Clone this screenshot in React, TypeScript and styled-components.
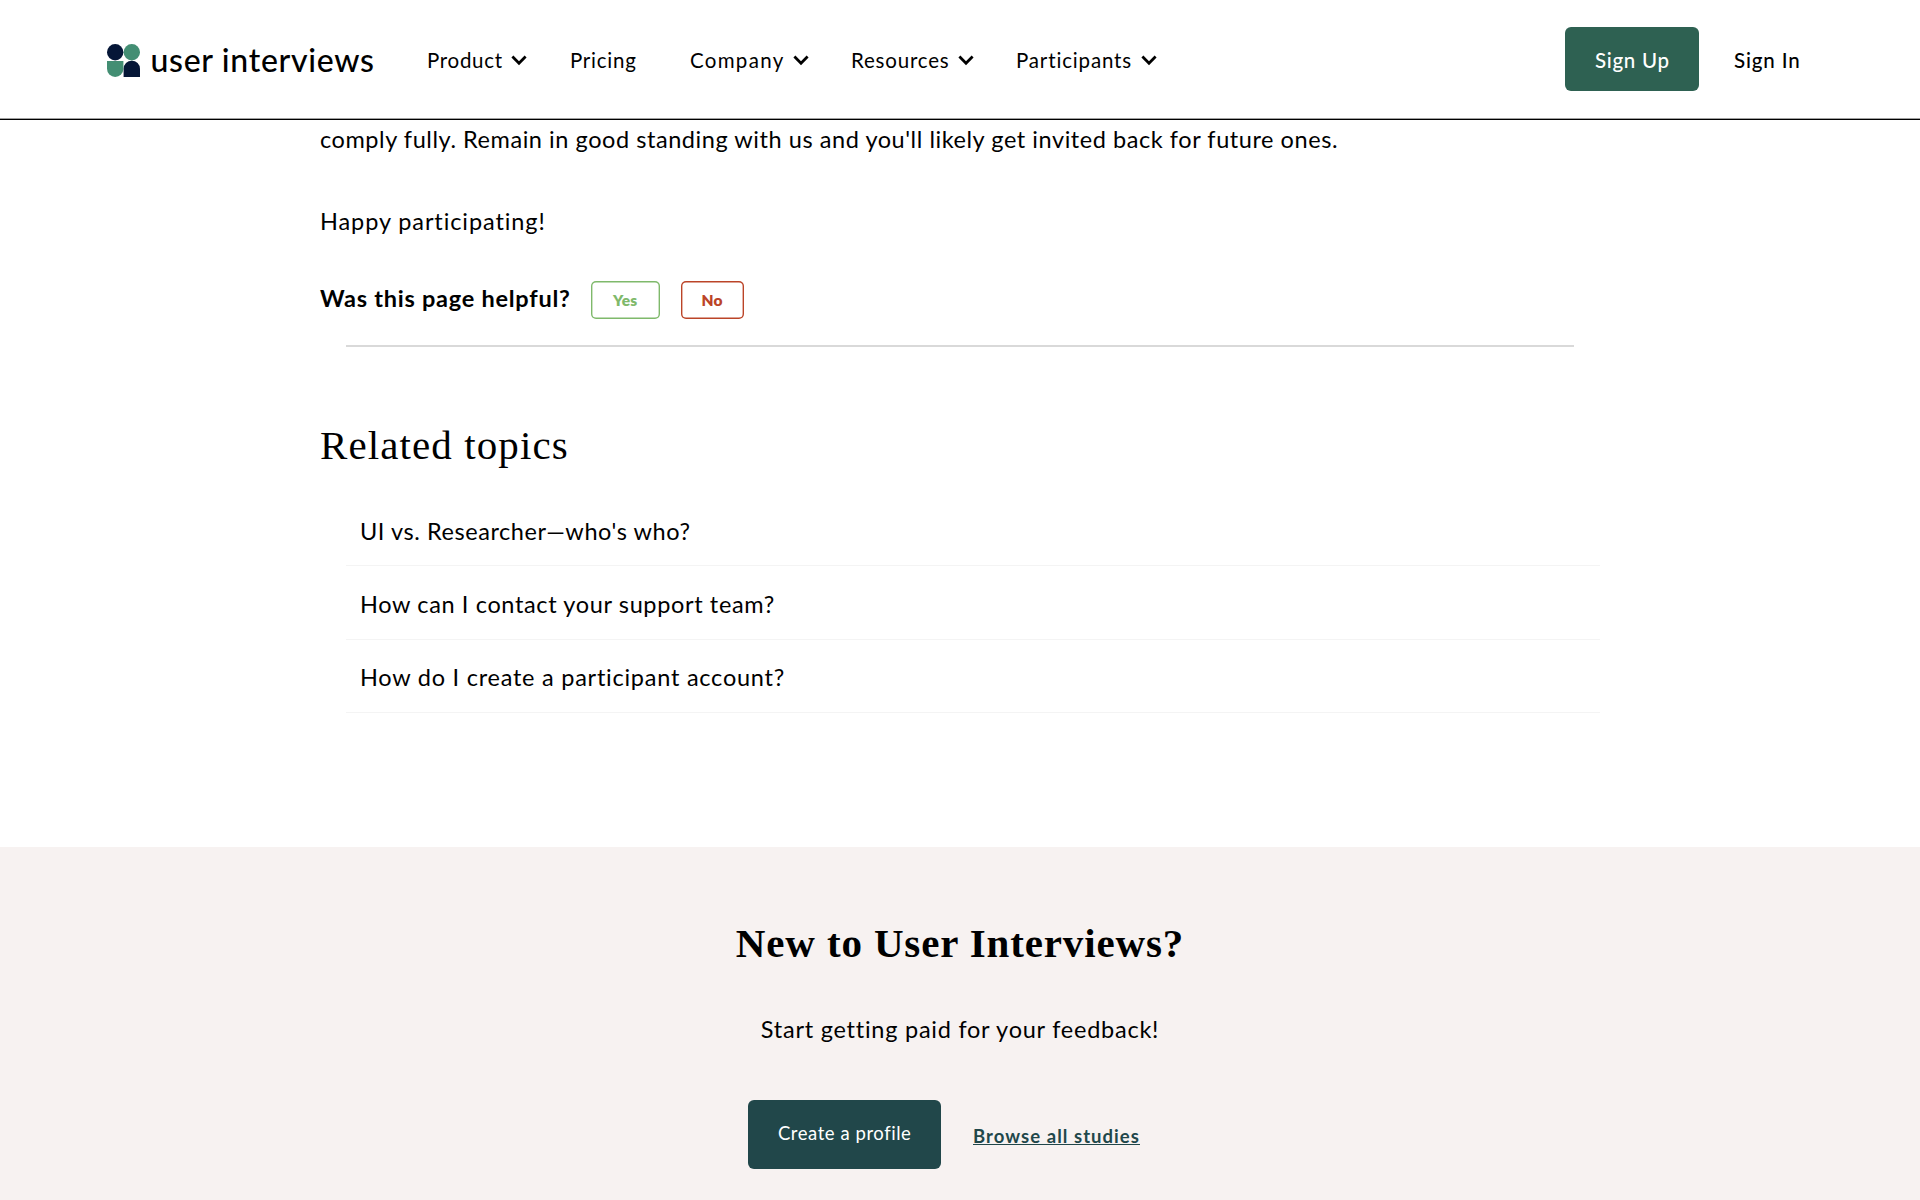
import React from "react";
import styled, { createGlobalStyle } from "styled-components";

const GlobalStyle = createGlobalStyle`
  * {
    box-sizing: border-box;
  }

  body {
    margin: 0;
    background-color: #fff;
    color: #000;
    font-family: Lato, "Liberation Sans", sans-serif;
    overflow: hidden;
  }
`;

const Page = styled.div`
  display: flex;
  flex-direction: column;
  width: 1920px;
  height: 1200px;
  overflow: hidden;
`;

const Header = styled.header`
  display: flex;
  flex: none;
  height: 120px;
  padding: 0 120px 0 107px;
  border-bottom: 1px solid #000;
  box-shadow: inset 0 -1px #a0a0a0;
`;

const Logo = styled.a`
  display: flex;
  width: 320px;
  padding-top: 44px;
`;

const LogoMark = styled.svg`
  width: 33px;
  height: 33px;
  margin-right: 10.5px;
`;

const LogoText = styled.span`
  font-size: 32px;
  font-weight: 500;
  line-height: 38px;
  letter-spacing: 0.7px;
  margin-top: -3px;
  white-space: nowrap;
`;

const Nav = styled.nav`
  display: grid;
  grid-template-columns: 143px 120px 161px 165px 160px;
  height: 24px;
  margin-top: 48px;
`;

const NavLink = styled.a<{ $spacing: number }>`
  display: flex;
  align-items: center;
  gap: 8.5px;
  font-size: 20.5px;
  line-height: 24px;
  letter-spacing: ${(props) => props.$spacing}px;
  white-space: nowrap;
`;

const Chevron = styled.svg`
  width: 16px;
  height: 11px;
`;

const Account = styled.div`
  display: flex;
  align-items: flex-start;
  margin-left: auto;
  padding-top: 27px;
`;

const SignUp = styled.a`
  width: 134px;
  height: 64px;
  padding: 21px 0 0 30px;
  border-radius: 6px;
  background-color: #2e6152;
  color: #fff;
  font-size: 20.5px;
  font-weight: 500;
  line-height: 24px;
  letter-spacing: 0.7px;
`;

const SignIn = styled.a`
  width: 66px;
  margin: 21px 0 0 35px;
  font-size: 20.5px;
  font-weight: 500;
  line-height: 24px;
  letter-spacing: 0.85px;
  white-space: nowrap;
`;

const Main = styled.main`
  flex: none;
  height: 727px;
  padding: 3px 320px 0;
`;

const Paragraph = styled.p<{ $spacing: number }>`
  margin: 0;
  font-size: 23.5px;
  line-height: 32px;
  letter-spacing: ${(props) => props.$spacing}px;
  white-space: nowrap;

  & + & {
    margin-top: 50px;
  }
`;

const Feedback = styled.div`
  display: flex;
  gap: 21px;
  height: 38px;
  margin-top: 44px;
`;

const Question = styled.strong`
  width: 250px;
  font-size: 23.5px;
  font-weight: 700;
  line-height: 34px;
  letter-spacing: 0.75px;
  white-space: nowrap;
`;

const VoteButton = styled.button<{ $color: string; $width: number }>`
  width: ${(props) => props.$width}px;
  height: 38px;
  padding: 0;
  border: 0;
  border-radius: 5px;
  background-color: transparent;
  box-shadow: inset 0 0 0 1.4px ${(props) => props.$color};
  color: ${(props) => props.$color};
  font-family: inherit;
  font-size: 15.5px;
  font-weight: 800;
  line-height: 38px;
  letter-spacing: 0.2px;
`;

const Divider = styled.hr`
  width: 1228px;
  height: 2px;
  margin: 26px 0 0 26px;
  border: 0;
  background-color: #d9d9d9;
`;

const Heading = styled.h2`
  margin: 73px 0 0;
  font-family: "Liberation Serif", serif;
  font-size: 41px;
  font-weight: 400;
  line-height: 50px;
  letter-spacing: 1.1px;
`;

const TopicList = styled.ul`
  width: 1254px;
  margin: 23px 0 0 26px;
  padding: 0;
  list-style: none;
`;

const Topic = styled.li<{ $spacing: number }>`
  height: 73.3px;
  padding: 21.5px 0 0 14px;
  border-bottom: 1px solid #f4f4f4;
  font-size: 23.5px;
  line-height: 32px;
  letter-spacing: ${(props) => props.$spacing}px;
`;

const Banner = styled.section`
  display: flex;
  flex: 1;
  flex-direction: column;
  align-items: center;
  padding-top: 71px;
  background-color: #f7f2f1;
`;

const BannerTitle = styled.h2`
  margin: 0;
  font-family: "Liberation Serif", serif;
  font-size: 41px;
  font-weight: 700;
  line-height: 50px;
  letter-spacing: 0.87px;
`;

const BannerText = styled.p`
  margin: 45px 0 55px;
  font-size: 23.5px;
  line-height: 32px;
  letter-spacing: 0.76px;
`;

const Actions = styled.div`
  display: flex;
  align-items: flex-start;
  gap: 32px;
  width: 424px;
`;

const ProfileButton = styled.a`
  width: 193px;
  height: 69px;
  padding: 22px 0 0 30px;
  border-radius: 6px;
  background-color: #21474a;
  color: #fff;
  font-size: 18.5px;
  line-height: 22px;
  letter-spacing: 0.55px;
  white-space: nowrap;
`;

const BrowseLink = styled.a`
  margin-top: 25px;
  color: #21474a;
  font-size: 18.5px;
  font-weight: 700;
  line-height: 22px;
  letter-spacing: 1.05px;
  text-decoration: underline;
  text-decoration-skip-ink: none;
  text-decoration-thickness: 1.3px;
  text-underline-offset: 1px;
  white-space: nowrap;
`;

const navItems = [
  { label: "Product", menu: true, spacing: 0.7 },
  { label: "Pricing", menu: false, spacing: 0.75 },
  { label: "Company", menu: true, spacing: 1.3 },
  { label: "Resources", menu: true, spacing: 0.8 },
  { label: "Participants", menu: true, spacing: 0.85 },
];

const topics = [
  { title: "UI vs. Researcher—who's who?", spacing: 0.57 },
  { title: "How can I contact your support team?", spacing: 0.64 },
  { title: "How do I create a participant account?", spacing: 0.76 },
];

function App() {
  return (
    <Page>
      <GlobalStyle />
      <Header>
        <Logo>
          <LogoMark viewBox="0 0 33 33">
            <circle cx="8.2" cy="8.2" r="8.2" fill="#051637" />
            <circle cx="24.8" cy="8.2" r="8.2" fill="#438e73" />
            <path d="M0 17H16.4V24.8A8.2 8.2 0 0 1 0 24.8Z" fill="#438e73" />
            <path d="M16.6 33V24.9A8.2 8.2 0 0 1 33 24.9V33Z" fill="#051637" />
          </LogoMark>
          <LogoText>user interviews</LogoText>
        </Logo>
        <Nav>
          {navItems.map((item) => (
            <NavLink key={item.label} $spacing={item.spacing}>
              {item.label}
              {item.menu && (
                <Chevron viewBox="0 0 16 11" fill="none">
                  <path d="M1.4 1.6L8 8.2L14.6 1.6" stroke="#000" strokeWidth="2.8" />
                </Chevron>
              )}
            </NavLink>
          ))}
        </Nav>
        <Account>
          <SignUp>Sign Up</SignUp>
          <SignIn>Sign In</SignIn>
        </Account>
      </Header>
      <Main>
        <Paragraph $spacing={0.56}>
          comply fully. Remain in good standing with us and you'll likely get
          invited back for future ones.
        </Paragraph>
        <Paragraph $spacing={0.9}>Happy participating!</Paragraph>
        <Feedback>
          <Question>Was this page helpful?</Question>
          <VoteButton $color="#7fb96b" $width={68.5}>
            Yes
          </VoteButton>
          <VoteButton $color="#bb4428" $width={63}>
            No
          </VoteButton>
        </Feedback>
        <Divider />
        <Heading>Related topics</Heading>
        <TopicList>
          {topics.map((topic) => (
            <Topic key={topic.title} $spacing={topic.spacing}>
              {topic.title}
            </Topic>
          ))}
        </TopicList>
      </Main>
      <Banner>
        <BannerTitle>New to User Interviews?</BannerTitle>
        <BannerText>Start getting paid for your feedback!</BannerText>
        <Actions>
          <ProfileButton>Create a profile</ProfileButton>
          <BrowseLink>Browse all studies</BrowseLink>
        </Actions>
      </Banner>
    </Page>
  );
}

export default App;
